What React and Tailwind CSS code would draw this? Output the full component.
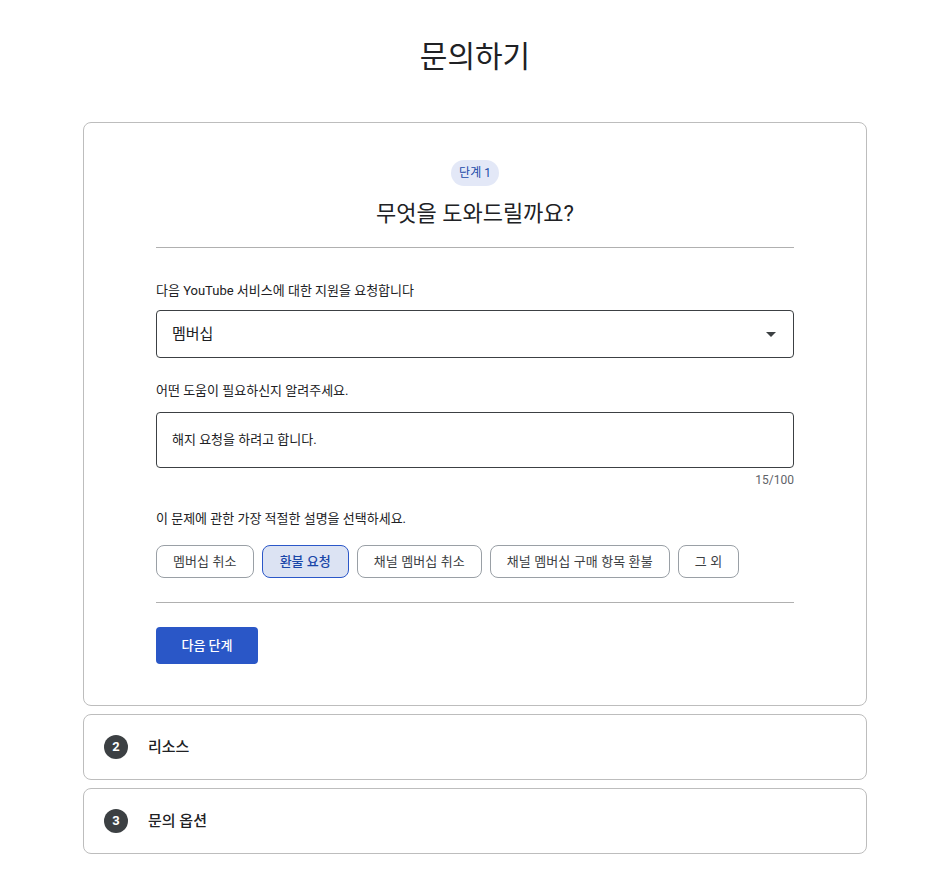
import React from "react";

export default function App() {
  const chips = ["멤버십 취소", "환불 요청", "채널 멤버십 취소", "채널 멤버십 구매 항목 환불", "그 외"];
  return (
    <div className="min-h-screen bg-white text-[#202124]" style={{ fontFamily: "Roboto, 'Noto Sans CJK KR', sans-serif" }}>
      <div className="w-[784px] ml-[83px] pt-[36px] pb-6">
        <h1 className="text-center text-[30px] leading-[42px] font-normal text-[#202124] mb-[44px]">문의하기</h1>

        <div className="border border-[#bdbdbd] rounded-[8px] px-[72px] pt-[37px] pb-[41px]">
          <div className="flex flex-col items-center">
            <span className="bg-[#e3e8f7] text-[#1a4aa8] text-[12px] leading-[26px] h-[26px] px-[8px] rounded-full">단계 1</span>
            <h2 className="mt-[14px] text-[22px] leading-[28px] text-[#202124]">무엇을 도와드릴까요?</h2>
          </div>
          <div className="mt-[19px] border-t border-[#b0b0b0]" />

          <div className="mt-[34px] text-[13px] leading-[18px] text-[#202124]">다음 YouTube 서비스에 대한 지원을 요청합니다</div>
          <div className="mt-[10px] h-[48px] border border-[#3c4043] rounded-[4px] flex items-center justify-between pl-[15px] pr-[17px]">
            <span className="text-[15px]">멤버십</span>
            <svg width="10" height="5" viewBox="0 0 10 5"><path d="M0 0 L10 0 L5 5 Z" fill="#3c4043" /></svg>
          </div>

          <div className="mt-[24px] text-[13px] leading-[18px]">어떤 도움이 필요하신지 알려주세요.</div>
          <div className="mt-[12px] h-[56px] border border-[#3c4043] rounded-[4px] flex items-center pl-[15px]">
            <span className="text-[13px]">해지 요청을 하려고 합니다.</span>
          </div>
          <div className="mt-[4px] text-right text-[12px] leading-[16px] text-[#5f6368] pr-0">15/100</div>

          <div className="mt-[22px] text-[13px] leading-[18px]">이 문제에 관한 가장 적절한 설명을 선택하세요.</div>
          <div className="mt-[17px] flex gap-[8px]">
            {chips.map((c, i) =>
              i === 1 ? (
                <span key={c} className="h-[33px] px-[17px] flex items-center rounded-[8px] border border-[#2b57c8] bg-[#dce3f3] text-[13px] font-medium text-[#1a47a8]">{c}</span>
              ) : (
                <span key={c} className="h-[33px] px-[16px] flex items-center rounded-[8px] border border-[#9aa0a6] bg-white text-[13px] text-[#3c4043] tracking-[0.1px]">{c}</span>
              )
            )}
          </div>
          <div className="mt-[24px] border-t border-[#b0b0b0]" />
          <button className="mt-[24px] h-[37px] w-[102px] bg-[#2a57c7] text-white text-[13px] font-medium rounded-[4px]">다음 단계</button>
        </div>

        <div className="mt-[8px] h-[66px] border border-[#bdbdbd] rounded-[8px] flex items-center pl-[20px]">
          <span className="w-[24px] h-[24px] rounded-full bg-[#3c4043] text-white text-[13px] font-bold flex items-center justify-center">2</span>
          <span className="ml-[20px] text-[15px] font-medium">리소스</span>
        </div>
        <div className="mt-[8px] h-[66px] border border-[#bdbdbd] rounded-[8px] flex items-center pl-[20px]">
          <span className="w-[24px] h-[24px] rounded-full bg-[#3c4043] text-white text-[13px] font-bold flex items-center justify-center">3</span>
          <span className="ml-[20px] text-[15px] font-medium">문의 옵션</span>
        </div>
      </div>
    </div>
  );
}
